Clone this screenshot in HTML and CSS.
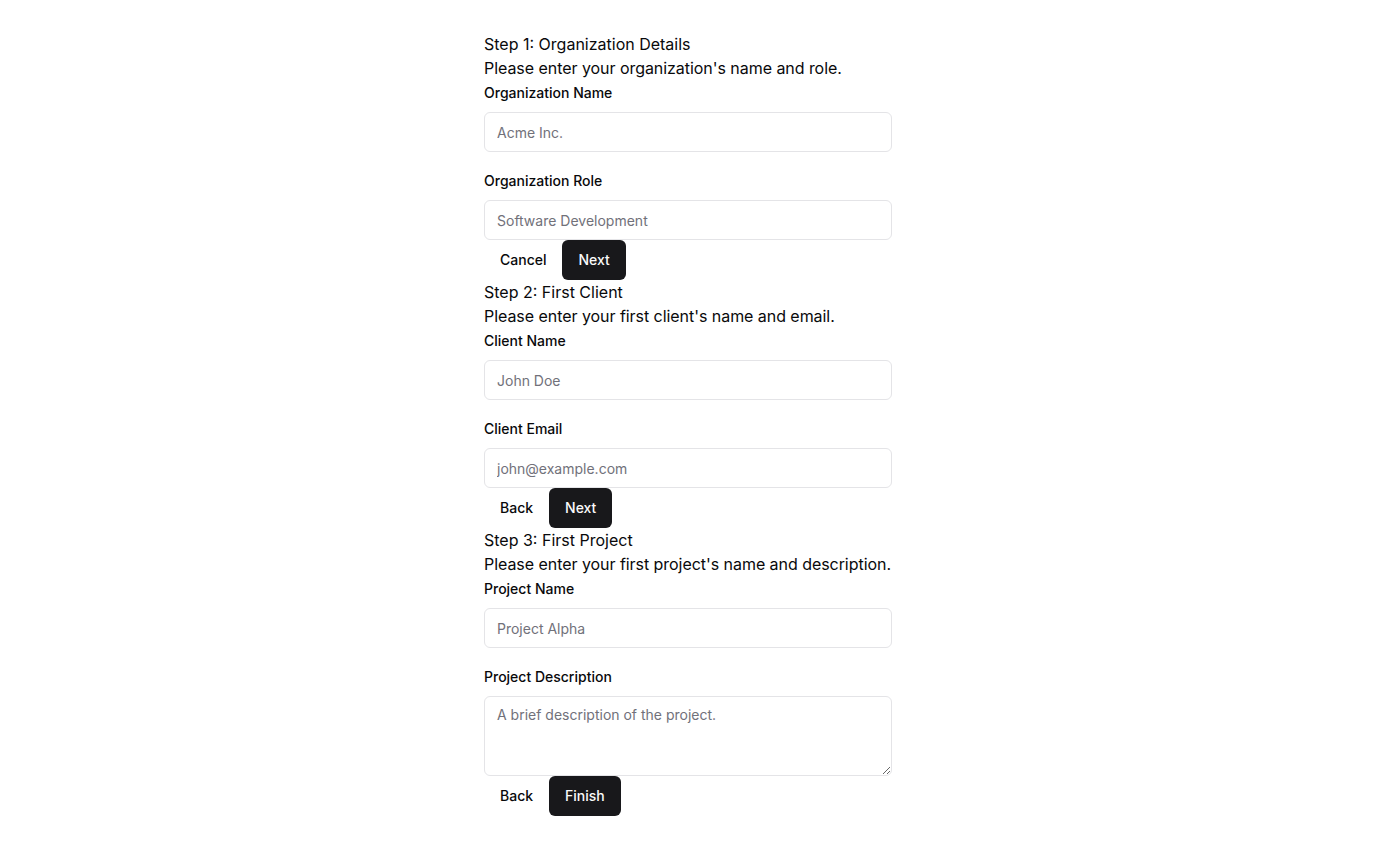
FILE: index.html
```html
<!DOCTYPE html>
<html lang="en">
<head>
<meta charset="utf-8">
<title>Onboarding</title>
<link rel="stylesheet" href="styles.css">
</head>
<body>
<main class="wizard">
  <section class="step">
    <h2 class="step-title">Step 1: Organization Details</h2>
    <p class="step-desc">Please enter your organization's name and role.</p>
    <div class="fields">
      <div class="field">
        <label class="label" for="org-name">Organization Name</label>
        <input class="input" id="org-name" type="text" placeholder="Acme Inc.">
      </div>
      <div class="field">
        <label class="label" for="org-role">Organization Role</label>
        <input class="input" id="org-role" type="text" placeholder="Software Development">
      </div>
    </div>
    <div class="actions">
      <button class="btn btn-ghost" type="button">Cancel</button>
      <button class="btn btn-primary" type="button">Next</button>
    </div>
  </section>

  <section class="step">
    <h2 class="step-title">Step 2: First Client</h2>
    <p class="step-desc">Please enter your first client's name and email.</p>
    <div class="fields">
      <div class="field">
        <label class="label" for="client-name">Client Name</label>
        <input class="input" id="client-name" type="text" placeholder="John Doe">
      </div>
      <div class="field">
        <label class="label" for="client-email">Client Email</label>
        <input class="input" id="client-email" type="email" placeholder="john@example.com">
      </div>
    </div>
    <div class="actions">
      <button class="btn btn-ghost" type="button">Back</button>
      <button class="btn btn-primary" type="button">Next</button>
    </div>
  </section>

  <section class="step">
    <h2 class="step-title">Step 3: First Project</h2>
    <p class="step-desc">Please enter your first project's name and description.</p>
    <div class="fields">
      <div class="field">
        <label class="label" for="project-name">Project Name</label>
        <input class="input" id="project-name" type="text" placeholder="Project Alpha">
      </div>
      <div class="field">
        <label class="label" for="project-desc">Project Description</label>
        <textarea class="input textarea" id="project-desc" placeholder="A brief description of the project."></textarea>
      </div>
    </div>
    <div class="actions">
      <button class="btn btn-ghost" type="button">Back</button>
      <button class="btn btn-primary" type="button">Finish</button>
    </div>
  </section>
</main>
</body>
</html>
```
FILE: styles.css
```css
* {
  box-sizing: border-box;
}

html, body {
  margin: 0;
  padding: 0;
  background: #ffffff;
}

body {
  font-family: Inter, "Liberation Sans", sans-serif;
  color: #09090b;
}

.wizard {
  width: 408px;
  margin: 32px auto 0;
  display: flex;
  flex-direction: column;
}

.step {
  display: flex;
  flex-direction: column;
}

.step-title {
  margin: 0;
  font-size: 16px;
  line-height: 24px;
  font-weight: 400;
}

.step-desc {
  margin: 0;
  font-size: 16px;
  line-height: 24px;
  white-space: nowrap;
  letter-spacing: -0.05px;
}

.fields {
  display: flex;
  flex-direction: column;
  gap: 19px;
  margin-top: 3px;
}

.field {
  display: flex;
  flex-direction: column;
  gap: 9px;
}

.label {
  font-size: 14px;
  line-height: 20px;
  font-weight: 500;
}

.input {
  display: block;
  width: 100%;
  height: 40px;
  padding: 8px 12px;
  border: 1px solid #e4e4e7;
  border-radius: 6px;
  background: #ffffff;
  font-family: inherit;
  font-size: 14px;
  line-height: 20px;
  color: #09090b;
  outline: none;
}

.input::placeholder {
  color: #71717a;
}

.textarea {
  height: 80px;
  resize: vertical;
}

.actions {
  display: flex;
}

.btn {
  height: 40px;
  padding: 0 16px;
  border: none;
  border-radius: 6px;
  font-family: inherit;
  font-size: 14px;
  font-weight: 500;
  line-height: 20px;
  cursor: pointer;
}

.btn-ghost {
  background: transparent;
  color: #09090b;
}

.btn-primary {
  background: #18181b;
  color: #fafafa;
}
```
